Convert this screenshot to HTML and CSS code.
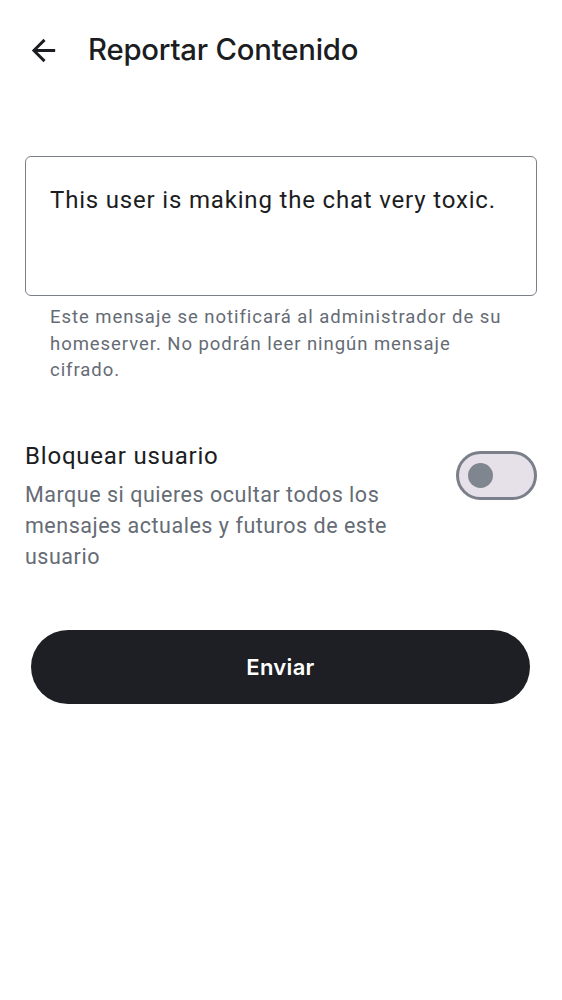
FILE: index.html
```html
<!DOCTYPE html>
<html lang="es">
<head>
<meta charset="utf-8">
<title>Reportar Contenido</title>
<link rel="stylesheet" href="styles.css">
</head>
<body>
<header class="topbar">
  <button class="back" aria-label="Atrás">
    <svg viewBox="0 0 24 24" width="35" height="35"><path d="M20 11H7.83l5.59-5.59L12 4l-8 8 8 8 1.41-1.41L7.83 13H20v-2z" fill="#1b1d22"/></svg>
  </button>
  <h1 class="title">Reportar Contenido</h1>
</header>
<main class="content">
  <div class="field">
    <div class="field-box">This user is making the chat very toxic.</div>
    <p class="supporting">Este mensaje se notificará al administrador de su homeserver. No podrán leer ningún mensaje cifrado.</p>
  </div>
  <div class="block-row">
    <div class="block-text">
      <div class="block-title">Bloquear usuario</div>
      <div class="block-desc">Marque si quieres ocultar todos los mensajes actuales y futuros de este usuario</div>
    </div>
    <div class="switch"><span class="thumb"></span></div>
  </div>
  <button class="send">Enviar</button>
</main>
</body>
</html>
```

FILE: styles.css
```css
* { box-sizing: border-box; }
html, body { margin: 0; padding: 0; background: #ffffff; }
body {
  font-family: Roboto, "Noto Sans", sans-serif;
  color: #1b1d22;
  width: 562px;
}
.topbar {
  height: 100px;
  display: flex;
  align-items: center;
  padding-left: 26px;
  gap: 27px;
}
.back {
  width: 35px;
  height: 35px;
  padding: 0;
  border: 0;
  background: none;
  display: flex;
}
.title {
  margin: 0;
  font-family: Inter, Roboto, sans-serif;
  font-weight: 500;
  font-size: 29.3px;
  letter-spacing: -0.2px;
  color: #1b1d22;
  line-height: 1;
}
.content {
  padding: 56px 25px 0 25px;
}
.field-box {
  height: 140px;
  border: 1.5px solid #7a7f88;
  border-radius: 6px;
  padding: 27px 24px 0 24px;
  font-size: 24px;
  letter-spacing: 0.82px;
  line-height: 32px;
  color: #1b1d22;
}
.supporting {
  margin: 8px 0 0 0;
  padding: 0 25px;
  font-size: 18.5px;
  line-height: 26.5px;
  letter-spacing: 0.95px;
  color: #656b75;
}
.block-row {
  display: flex;
  justify-content: space-between;
  align-items: flex-start;
  margin-top: 56px;
}
.block-text { width: 390px; }
.block-title {
  font-size: 24px;
  line-height: 32px;
  letter-spacing: 0.8px;
  color: #1b1d22;
}
.block-desc {
  margin-top: 7px;
  font-size: 21.5px;
  line-height: 31px;
  letter-spacing: 0.52px;
  color: #656b75;
}
.switch {
  margin-top: 11px;
  width: 81px;
  height: 49px;
  border: 3px solid #7a7f8a;
  border-radius: 25px;
  background: #e6e0e9;
  display: flex;
  align-items: center;
  padding-left: 9px;
}
.thumb {
  width: 25px;
  height: 25px;
  border-radius: 50%;
  background: #80868f;
}
.send {
  display: flex;
  align-items: center;
  justify-content: center;
  width: 499px;
  height: 74px;
  margin: 58px 0 0 6px;
  border: 0;
  border-radius: 37px;
  background: #1e1f24;
  color: #ffffff;
  font-family: Inter, Roboto, sans-serif;
  font-weight: 600;
  font-size: 22px;
  letter-spacing: 0.3px;
}
```
